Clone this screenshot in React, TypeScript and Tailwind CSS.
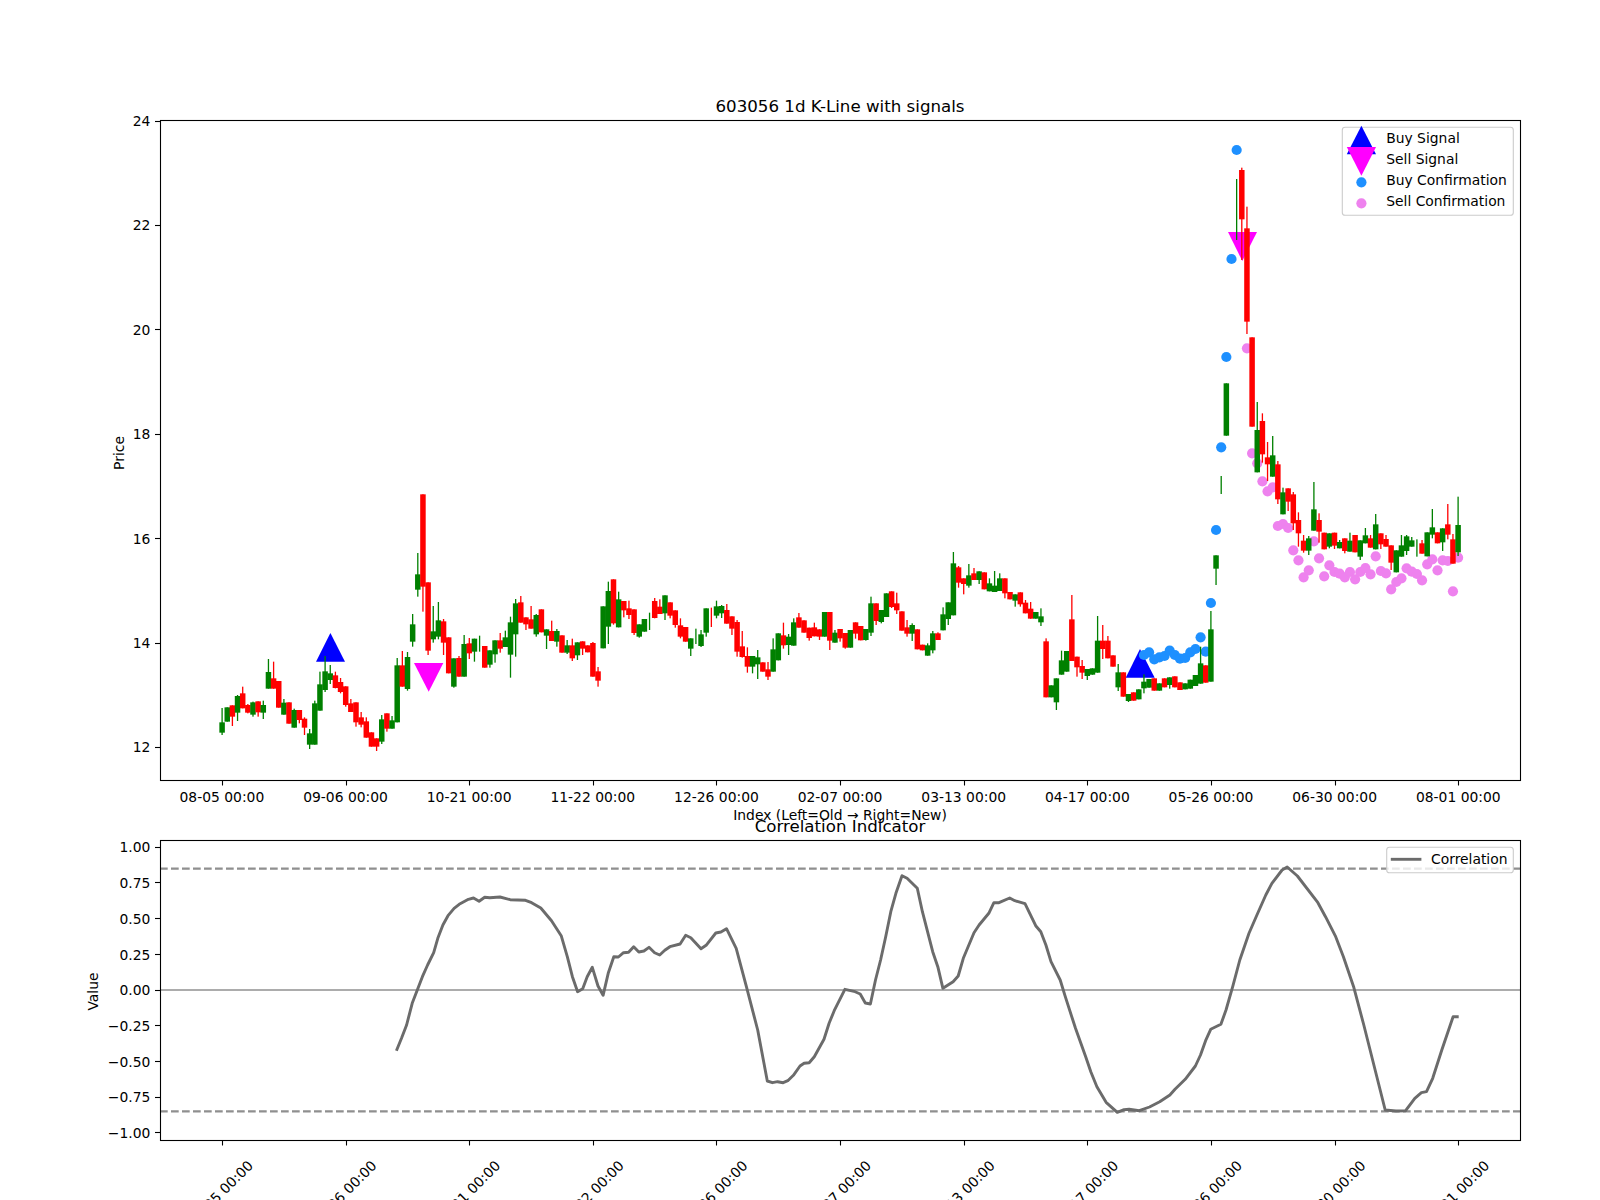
const X = (i: number) => 222.1 + 5.15 * i;
const TX = (i: number) => 222.4 + 5.1515 * i;

const parse = (s: string, y0: number) =>
  s
    .trim()
    .split(/\s*;\s*/)
    .filter(Boolean)
    .map((r) => {
      const p = r.trim().split(/\s+/);
      const n = p.slice(1).map((v) => y0 + Number(v) / 3);
      const top = n[0];
      const bot = n[1];
      const wt = n.length > 2 ? n[2] : top;
      const wb = n.length > 3 ? n[3] : bot;
      return { c: p[0], top, bot, wt, wb };
    });

const s1 = `g 727 758 684 765;g 682 725;r 676 710 676 738;g 648 698 645 723;r 640 685 620 685;r 675 698 672 700;g 667 704 665 710;r 664 697 664 710;g 675 698 662 717;
g 576 626 537 626;r 595 626 545 626;r 603 683;g 668 704 657 704;r 667 731;g 690 743 686 743;r 690 720 690 730;r 716 743 712 765;g 760 794 747 807;g 670 794 662 794;
g 613 692 575 692;g 574 630 528 636;g 580 600 555 612;r 586 624 575 625;r 606 636 594 640;r 619 675 619 680;r 670 696 657 696;r 667 727 667 740;r 712 734 696 742;r 724 773 712 773;
r 757 800;r 775 800 775 813;g 718 785 705 792;r 700 746 700 755;g 721 746 708 746;g 556 727 534 727;r 556 620 513 620;g 531 627 516 632;g 433 485 402 500;g 283 329 219 350;
r 43 320 43 395;r 307 512 307 525;g 454 478 378 488;g 421 470 366 478;r 424 488 417 525;r 472 580;g 535 620 535 623;r 534 590 528 590;g 492 590 465 590;r 490 520 474 537;
g 476 515 476 545;g 515 515 467 515;r 498 563;g 511 554 511 563;g 481 523 481 548;r 481 506 459 518;g 472 501 452 501;g 427 524 410 593;g 370 463 357 530;r 367 428 348 428;
r 412 433 412 450;r 418 446 378 446;g 405 463 402 470;r 388 457;g 448 467 448 507`;

const s2 = `r 303 333 272 333;g 303 335 297 350;r 316 368;g 346 368 330 372;r 346 385 326 393;g 337 376 337 390;r 334 356 334 375;r 346 367;r 339 440 336 440;r 424 452 411 470;
g 229 355;g 183 290 155 342;r 148 280 148 284;g 208 292 185 292;r 213 241 213 262;r 235 255 212 267;r 238 309 238 315;g 283 320 283 323;g 267 305;g 300 300 248 300;
r 213 264 204 265;r 230 252 208 252;g 196 250 196 270;r 217 257 217 265;r 241 285 241 293;r 286 320 265 325;r 291 335;g 325 356 325 378;g 342 342 296 342;g 313 348 300 351;
g 235 308 235 320;r 291 291 233 291;g 229 257 212 265;g 228 250 225 264;r 240 281 222 281;r 259 296 259 315;r 276 365 270 380;r 349 381 303 383;r 378 410 352 428;g 378 410 378 430;
g 382 403 360 447;r 397 425;r 418 440 396 450;g 358 425 325 425;g 310 391;r 316 346 278 356;g 320 345 312 375;g 277 347 265 347;r 262 293 249 293;r 271 308;r 293 324 293 332;
r 292 319 278 319;r 298 320 298 330;g 246 320;r 246 332 246 360;g 308 338 300 338;r 297 325 297 335;r 309 353 309 356;g 300 353;r 277 311 277 326;r 288 331;g 297 330 297 332;
g 220 308 200 318;r 220 273 220 285;g 240 276 240 280;g 190 261;r 184 231 184 234;r 220 241 188 252;r 244 302;r 292 311 270 320;g 285 311 280 333;r 298 358;r 344 361;g 346 377 340 377;
g 310 361 303 370;r 310 330 307 330;g 253 301 232 301;g 217 267 217 285;g 100 256 66 256;r 112 158 108 173;r 145 162 145 193;g 136 167 102 173;r 130 150 114 150;g 124 150 124 162;
r 127 178;g 160 184 145 184;g 167 186 123 186;g 145 183 130 183;r 145 190 145 205;r 186 208;g 193 212 193 230;r 187 223 187 230;r 218 250 210 250;r 236 266 216 266;g 246 266;
g 259 277 235 288;r 334 502 325 502;g 466 502;g 445 517 445 540;g 391 434 362 434;g 363 425;r 268 393 195 393;r 380 412 380 440;r 408 428 390 447;g 417 438 417 450;g 415 434;
g 332 428 258 428;r 332 357 285 387;r 332 385 318 385;r 376 410;g 427 472 402 483;r 427 500;g 492 513 492 516;r 487 512;g 478 508;g 455 475 433 490;g 447 473;r 445 482;g 460 482;
r 445 472;g 442 465 442 476;r 439 472;r 457 480;g 460 478;g 449 476;g 435 468;g 400 461 350 461;r 406 458;g 298 455 243 455;g 76 116 76 165`;

const s3 = `g 318 318 318 372;g 40 197;x 0 0;g -390 -390 -573 -390;r -600 -452 -607 -330;r -425 -145 -490 -108;r -98 170;g 180 307 96 307;r 153 253 130 278;r 262 283 216 333;g 256 320 198 320;
r 283 388 273 402;g 367 433 353 433;r 355 395 355 423;r 373 460 366 480;r 450 490 427 530;r 512 542 495 548;g 505 542 498 555;g 418 482 336 482;r 450 485 430 518;r 488 538;g 490 530 490 535;
r 488 527 488 537;g 516 535 510 535;r 505 543 505 550;g 512 545 488 545;r 495 547;g 511 560 511 570;g 496 520 474 520;r 505 533 495 533;g 463 538 432 538;r 490 523 490 537;r 507 530 495 530;
r 526 578 526 600;g 541 607;g 526 560 495 560;g 499 543 495 555;g 511 530 501 530;g 560 560 508 560;r 520 551 510 551;g 487 559;g 472 494 417 505;r 487 520;g 475 517 475 543;r 463 494 402 508;
r 508 581 492 581;g 465 547 380 558`;

const candles = [...parse(s1, 480), ...parse(s2, 530), ...parse(s3, 370)];

const blue: [number, number][] = [
  [179, 655], [180, 652.3], [181, 659.3], [182, 657.3], [183, 656], [184, 650.7], [185, 655], [186, 658.7], [187, 658], [188, 652.3], [189, 649], [190, 637.3], [191, 651.7],
  [192, 603], [193, 530], [194, 447.3], [195, 357], [196, 259], [197, 150],
];

const violetZ: [number, number][] = [
  [200, 250], [201, 280], [202, 334], [203, 364], [204, 352], [205, 468], [206, 462], [207, 474], [208, 541], [209, 571], [210, 622], [211, 601], [212, 514], [213, 565], [214, 619],
  [215, 586], [216, 606], [217, 611], [218, 622], [219, 606], [220, 628], [221, 606], [222, 594], [223, 613], [224, 559], [225, 603], [226, 610], [227, 658], [228, 636], [229, 625],
  [230, 595], [231, 605], [232, 612], [233, 631], [234, 583], [235, 568], [236, 601], [237, 571], [238, 573], [239, 664], [240, 563],
];

const corrA: [number, number][] = [
  [777,842],[787,805],[797,765],[808,700],[818,660],[828,620],[838,585],[850,548],[858,505],[868,465],[878,437],[890,415],[900,403],[918,388],[928,384],[939,394],[950,382],[960,383],[980,381],[1000,389],[1030,391],[1042,398],[1060,414],[1081,452],[1100,497],[1112,560],[1122,620],[1132,665],[1142,656],[1151,620],[1161,592],[1172,648],[1182,676],[1192,610],[1203,560],[1212,561],[1222,548],[1232,547],[1242,530],[1252,546],[1262,543],[1272,532],[1283,548],[1293,555],[1303,541],[1313,530],[1333,522],[1344,496],[1354,503],[1374,536],[1384,526],[1403,489],[1413,486],[1424,476],[1443,535],[1463,650],[1485,780],[1504,933],[1514,938],[1524,935],[1535,938],[1544,932],[1555,916],[1568,888],
];
const corrB: [number, number][] = [
  [8,880],[18,878],[28,860],[47,808],[57,760],[67,722],[88,658],[108,665],[118,672],[128,699],[138,702],[148,630],[158,570],[168,500],[178,425],[188,370],[200,317],[210,325],[230,355],[240,425],[260,545],[270,590],[280,655],[300,635],[310,618],[320,565],[341,488],[351,465],[370,430],[380,398],[390,398],[411,384],[421,392],[441,401],[462,467],[472,485],[482,525],[492,575],[510,630],[520,680],[540,775],[560,860],[570,905],[582,950],[600,997],[622,1027],[635,1019],[645,1018],[665,1022],[685,1011],[705,995],[725,975],[735,958],[755,928],[775,888],[785,855],[795,812],[805,778],[825,763],[835,720],[848,650],[862,570],[880,490],[895,437],[913,375],[925,340],[945,300],[955,291],[975,318],[1015,398],[1030,440],[1050,500],[1065,560],[1085,650],[1105,765],[1147,1020],[1168,1023],[1187,1022],[1205,985],[1218,968],[1228,965],[1240,925],[1258,840],[1280,740],[1291,740],
];
const corr = [
  ...corrA.map(([x, y]) => `${(x / 1.96).toFixed(1)},${(770 + y / 3).toFixed(1)}`),
  ...corrB.map(([x, y]) => `${(800 + x / 1.96).toFixed(1)},${(770 + y / 3).toFixed(1)}`),
].join(" ");

const dates = ["08-05", "09-06", "10-21", "11-22", "12-26", "02-07", "03-13", "04-17", "05-26", "06-30", "08-01"];
const priceTicks = [24, 22, 20, 18, 16, 14, 12];
const corrTicks = [1, 0.75, 0.5, 0.25, 0, -0.25, -0.5, -0.75, -1];
const tickX = dates.map((_, k) => TX(24 * k));
const snap = (v: number) => Math.floor(v) + 0.5;

const GREEN = "#008000";
const RED = "#ff0000";

export default function App() {
  return (
    <div className="w-[1600px] h-[1200px] bg-white overflow-hidden">
      <svg width={1600} height={1200} viewBox="0 0 1600 1200" className="block" fontFamily="'DejaVu Sans', sans-serif" fill="#000">
        {/* price panel */}
        <text x={840} y={111.7} fontSize={16.67} textAnchor="middle">603056 1d K-Line with signals</text>

        <polygon points="316,661.7 345,661.7 330.4,633" fill="#0000ff" />
        <polygon points="1125.7,677.7 1154.7,677.7 1140,649" fill="#0000ff" />
        <polygon points="414,663 443.3,663 428.7,691.7" fill="#ff00ff" />
        <polygon points="1228,232 1257,232 1242.3,261" fill="#ff00ff" />

        {blue.map(([i, y]) => (
          <circle key={i} cx={X(i)} cy={y} r={5.1} fill="#1e90ff" />
        ))}
        {violetZ.map(([i, z]) => (
          <circle key={i} cx={X(i)} cy={370 + z / 3} r={5.1} fill="#ee82ee" />
        ))}
        <circle cx={X(199)} cy={348.3} r={5.1} fill="#ee82ee" />

        {candles.map((c, i) =>
          c.c === "x" ? null : (
            <g key={i} fill={c.c === "g" ? GREEN : RED} stroke="none">
              <rect x={X(i) - 0.65} y={c.wt} width={1.3} height={Math.max(c.wb - c.wt, 0)} />
              {c.bot > c.top && <rect x={X(i) - 2.75} y={c.top} width={5.5} height={c.bot - c.top} />}
            </g>
          ),
        )}

        <rect x={160.5} y={120.5} width={1360} height={660} fill="none" stroke="#000" strokeWidth={1.1} />
        {priceTicks.map((p, k) => {
          const y = 121 + k * 104.4;
          return (
            <g key={p}>
              <line x1={155} x2={160} y1={snap(y)} y2={snap(y)} stroke="#000" strokeWidth={1.1} />
              <text x={150.3} y={y + 5} fontSize={13.89} textAnchor="end">{p}</text>
            </g>
          );
        })}
        {tickX.map((x, k) => (
          <g key={k}>
            <line x1={snap(x)} x2={snap(x)} y1={781} y2={785.5} stroke="#000" strokeWidth={1.1} />
            <text x={x - 0.5} y={801.7} fontSize={13.89} textAnchor="middle">{dates[k]} 00:00</text>
          </g>
        ))}
        <text x={840} y={820} fontSize={13.89} textAnchor="middle">Index (Left=Old → Right=New)</text>
        <text transform="translate(124 453) rotate(-90)" fontSize={13.89} textAnchor="middle">Price</text>

        {/* legend */}
        <rect x={1342.3} y={127.3} width={171} height={88} rx={2.8} fill="#ffffff" fillOpacity={0.8} stroke="#cccccc" strokeWidth={1.1} />
        <polygon points="1346.8,154.3 1376,154.3 1361.4,125.7" fill="#0000ff" />
        <polygon points="1346.8,147 1376,147 1361.4,175.7" fill="#ff00ff" />
        <circle cx={1361.4} cy={182.3} r={5.1} fill="#1e90ff" />
        <circle cx={1361.4} cy={203.3} r={5.1} fill="#ee82ee" />
        <text x={1386.2} y={143.3} fontSize={13.89}>Buy Signal</text>
        <text x={1386.2} y={164.3} fontSize={13.89}>Sell Signal</text>
        <text x={1386.2} y={185.3} fontSize={13.89}>Buy Confirmation</text>
        <text x={1386.2} y={206.3} fontSize={13.89}>Sell Confirmation</text>

        {/* correlation panel */}
        <text x={840} y={831.7} fontSize={16.67} textAnchor="middle">Correlation Indicator</text>
        <line x1={160} x2={1520} y1={990} y2={990} stroke="#acacac" strokeWidth={2.08} />
        <line x1={160} x2={1520} y1={868.6} y2={868.6} stroke="#8f8f8f" strokeWidth={2.08} strokeDasharray="7.7 3.3" />
        <line x1={160} x2={1520} y1={1111.4} y2={1111.4} stroke="#8f8f8f" strokeWidth={2.08} strokeDasharray="7.7 3.3" />
        <polyline points={corr} fill="none" stroke="#6b6b6b" strokeWidth={2.9} strokeLinejoin="round" />
        <rect x={160.5} y={840.5} width={1360} height={300} fill="none" stroke="#000" strokeWidth={1.1} />
        {corrTicks.map((v) => {
          const y = 990 - 142.86 * v;
          return (
            <g key={v}>
              <line x1={155} x2={160} y1={snap(y)} y2={snap(y)} stroke="#000" strokeWidth={1.1} />
              <text x={150.3} y={y + 5.3} fontSize={13.89} textAnchor="end">{v < 0 ? `\u2212${Math.abs(v).toFixed(2)}` : v.toFixed(2)}</text>
            </g>
          );
        })}
        <text transform="translate(98 991.5) rotate(-90)" fontSize={13.89} textAnchor="middle">Value</text>
        {tickX.map((x, k) => (
          <g key={k}>
            <line x1={snap(x)} x2={snap(x)} y1={1141} y2={1145.5} stroke="#000" strokeWidth={1.1} />
            <text transform={`translate(${x + 31.5} 1166.5) rotate(-45)`} fontSize={13.89} textAnchor="end">{dates[k]} 00:00</text>
          </g>
        ))}
        <rect x={1386.7} y={847.3} width={126.6} height={25.4} rx={2.8} fill="#ffffff" fillOpacity={0.8} stroke="#cccccc" strokeWidth={1.1} />
        <line x1={1390.8} x2={1421.4} y1={859.3} y2={859.3} stroke="#6b6b6b" strokeWidth={2.9} />
        <text x={1431} y={864} fontSize={13.89}>Correlation</text>
      </svg>
    </div>
  );
}
